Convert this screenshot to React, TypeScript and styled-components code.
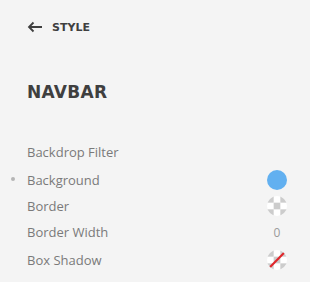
import styled, { createGlobalStyle } from "styled-components";

const GlobalStyle = createGlobalStyle`
  html, body {
    margin: 0;
    padding: 0;
    background: #f4f4f4;
  }
`;

const StyledPanel = styled.div`
  width: 310px;
  height: 282px;
  background: #f4f4f4;
  padding: 18px 0 0 0;
  box-sizing: border-box;
  font-family: "Open Sans", "Liberation Sans", sans-serif;
  overflow: hidden;
`;

const StyledBack = styled.div`
  display: flex;
  align-items: center;
  gap: 9px;
  height: 18px;
  padding-left: 27px;
  color: #3f3f3f;
  font-family: "DejaVu Sans", sans-serif;
  font-weight: 700;
  font-size: 11px;
`;

const StyledTitle = styled.h2`
  margin: 44px 0 0 0;
  padding-left: 27px;
  color: #3f3f3f;
  font-family: "DejaVu Sans", sans-serif;
  font-weight: 700;
  font-size: 17px;
  line-height: 24px;
  letter-spacing: 0.3px;
`;

const StyledList = styled.div`
  display: flex;
  flex-direction: column;
  margin-top: 34px;
`;

const StyledRow = styled.div<{ $height: number }>`
  position: relative;
  display: flex;
  align-items: center;
  justify-content: space-between;
  height: ${(p) => p.$height}px;
  padding: 0 23px 0 27px;
  font-size: 13px;
  color: #7a7a7a;
`;

const StyledDot = styled.span`
  position: absolute;
  left: 11px;
  top: 50%;
  width: 4px;
  height: 4px;
  margin-top: -3px;
  border-radius: 50%;
  background: #b5b5b5;
`;

const StyledSwatch = styled.span<{ $color?: string }>`
  display: block;
  width: 20px;
  height: 20px;
  border-radius: 50%;
  background: ${(p) => p.$color ?? "transparent"};
`;

const StyledValue = styled.span`
  width: 20px;
  text-align: center;
  font-size: 12px;
  color: #9a9a9a;
`;

const cells = [0, 2, 4, 6, 8];

function Checker({ slash }: { slash?: boolean }) {
  const id = slash ? "clip-shadow" : "clip-border";
  return (
    <svg width="20" height="20" viewBox="0 0 21 21">
      <defs>
        <clipPath id={id}>
          <circle cx="10.5" cy="10.5" r="10.5" />
        </clipPath>
      </defs>
      <g clipPath={`url(#${id})`}>
        <rect width="21" height="21" fill="#ffffff" />
        {cells.map((i) => (
          <rect
            key={i}
            x={(i % 3) * 7}
            y={Math.floor(i / 3) * 7}
            width="7"
            height="7"
            fill="#cccccc"
          />
        ))}
        {slash && (
          <line x1="3" y1="18" x2="18" y2="3" stroke="#e0262b" strokeWidth="2.2" />
        )}
      </g>
    </svg>
  );
}

function App() {
  return (
    <>
      <GlobalStyle />
      <StyledPanel>
        <StyledBack>
          <svg width="16" height="12" viewBox="0 0 16 12">
            <path
              d="M15 6H2M6.5 1.5 2 6l4.5 4.5"
              fill="none"
              stroke="#3f3f3f"
              strokeWidth="1.8"
            />
          </svg>
          <span>STYLE</span>
        </StyledBack>
        <StyledTitle>NAVBAR</StyledTitle>
        <StyledList>
          <StyledRow $height={28}>
            <span>Backdrop Filter</span>
          </StyledRow>
          <StyledRow $height={28}>
            <StyledDot />
            <span>Background</span>
            <StyledSwatch $color="#62b0f0" />
          </StyledRow>
          <StyledRow $height={24}>
            <span>Border</span>
            <Checker />
          </StyledRow>
          <StyledRow $height={28}>
            <span>Border Width</span>
            <StyledValue>0</StyledValue>
          </StyledRow>
          <StyledRow $height={28}>
            <span>Box Shadow</span>
            <Checker slash />
          </StyledRow>
        </StyledList>
      </StyledPanel>
    </>
  );
}

export default App;
